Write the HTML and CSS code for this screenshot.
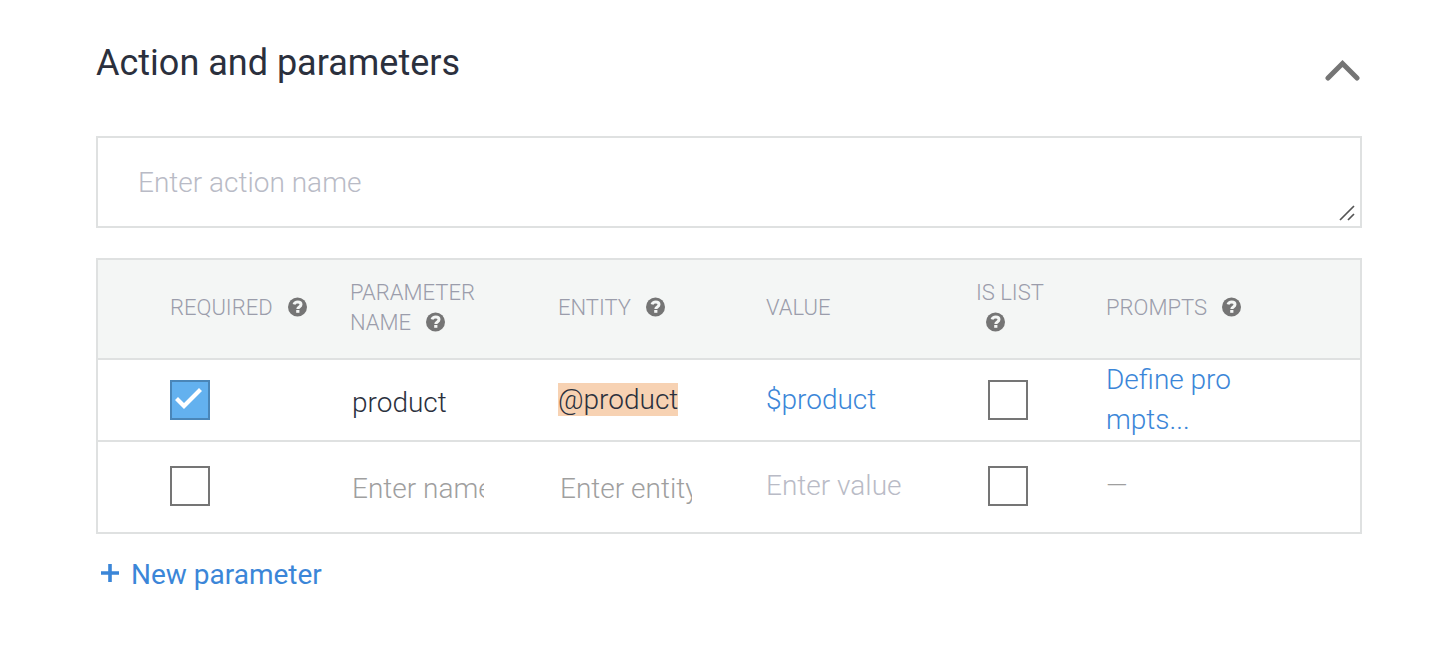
FILE: index.html
```html
<!DOCTYPE html>
<html lang="en">
<head>
    <meta charset="UTF-8">
    <meta name="viewport" content="width=device-width, initial-scale=1.0">
    <title>Action and parameters</title>
    <link rel="stylesheet" href="styles.css">
</head>
<body>
    <svg class="sprite" aria-hidden="true">
        <symbol id="help" viewBox="0 0 20 20">
            <circle cx="9.500" cy="10" r="9.500" fill="#757575"/>
            <path d="M6 7.400C6.600 5.600 8 4.900 9.700 4.900c1.900 0 3.300 1 3.300 2.700 0 2.400-3.200 2.300-3.200 4.400" fill="none" stroke="#f4f6f5" stroke-width="3"/>
            <rect x="8.200" y="13" width="3.200" height="2.800" fill="#f4f6f5"/>
        </symbol>
    </svg>
    <section class="panel">
        <header class="panel-header">
            <h1>Action and parameters</h1>
            <button class="collapse" type="button" aria-label="Collapse">
                <svg width="36" height="24" viewBox="0 0 36 24"><path d="M4 20 18.500 5.500 33 20" fill="none" stroke="#757575" stroke-width="5" stroke-linecap="round"/></svg>
            </button>
        </header>
        <div class="action">
            <textarea class="action-name" rows="1" placeholder="Enter action name" aria-label="Action name"></textarea>
            <svg class="grip" width="16" height="16" viewBox="0 0 16 16" aria-hidden="true"><path d="M1 15 15 1M9 15l6-6" fill="none" stroke="#555" stroke-width="1.700"/></svg>
        </div>
        <table class="params">
            <colgroup>
                <col class="col-required">
                <col class="col-name">
                <col class="col-entity">
                <col class="col-value">
                <col class="col-list">
                <col class="col-prompts">
            </colgroup>
            <thead>
                <tr>
                    <th class="first">REQUIRED <svg class="help"><use href="#help"/></svg></th>
                    <th>PARAMETER<br>NAME <svg class="help"><use href="#help"/></svg></th>
                    <th>ENTITY <svg class="help"><use href="#help"/></svg></th>
                    <th>VALUE</th>
                    <th>IS LIST<br><svg class="help"><use href="#help"/></svg></th>
                    <th>PROMPTS <svg class="help"><use href="#help"/></svg></th>
                </tr>
            </thead>
            <tbody>
                <tr>
                    <td class="first"><input type="checkbox" class="check" aria-label="Required" checked></td>
                    <td><input type="text" class="field" value="product" aria-label="Parameter name"></td>
                    <td><span class="entity">@product</span></td>
                    <td><span class="value">$product</span></td>
                    <td class="list"><input type="checkbox" class="check" aria-label="Is list"></td>
                    <td><a href="#" class="prompts">Define prompts...</a></td>
                </tr>
                <tr class="new-row">
                    <td class="first"><input type="checkbox" class="check" aria-label="Required"></td>
                    <td><input type="text" class="field" placeholder="Enter name" aria-label="Parameter name"></td>
                    <td><input type="text" class="field" placeholder="Enter entity" aria-label="Entity"></td>
                    <td><span class="hint">Enter value</span></td>
                    <td class="list"><input type="checkbox" class="check" aria-label="Is list"></td>
                    <td><span class="dash">—</span></td>
                </tr>
            </tbody>
        </table>
        <button class="add" type="button">
            <svg width="20" height="24" viewBox="0 0 20 24" aria-hidden="true"><path d="M10 1v18M1 10h18" stroke="#3b86d8" stroke-width="3.600"/></svg>
            New parameter
        </button>
    </section>
</body>
</html>
```

FILE: styles.css
```css
* {
    box-sizing: border-box;
}
body {
    margin: 0;
    background: #fff;
    color: #2b303d;
    font-family: Roboto, sans-serif;
    font-size: 28px;
    font-weight: 300;
}
button, input, textarea {
    font: inherit;
    color: inherit;
}
.sprite {
    display: none;
}
.panel {
    padding: 40px 92px 40px 96px;
}
.panel-header {
    display: flex;
    justify-content: space-between;
    align-items: flex-start;
    margin-bottom: 50px;
}
h1 {
    margin: 0;
    font-size: 36px;
    line-height: 46px;
    font-weight: 400;
}
.collapse {
    padding: 0;
    margin: 18px 2px 0 0;
    border: 0;
    background: none;
    line-height: 0;
    cursor: pointer;
}
.action {
    position: relative;
    margin-bottom: 30px;
}
.action-name {
    display: block;
    width: 100%;
    height: 92px;
    padding: 26px 40px;
    border: 2px solid #dfe1e1;
    border-radius: 0;
    line-height: 38px;
    resize: none;
    outline: none;
    overflow: hidden;
}
.action-name::placeholder {
    color: #b9bbc6;
}
.grip {
    position: absolute;
    right: 7px;
    bottom: 7px;
}
.params {
    width: 100%;
    table-layout: fixed;
    border: 2px solid #dfe1e1;
    border-spacing: 0;
}
.col-required {
    width: 252px;
}
.col-name, .col-entity {
    width: 208px;
}
.col-value {
    width: 210px;
}
.col-list {
    width: 130px;
}
th {
    height: 100px;
    padding: 0 0 2px;
    background: #f4f6f5;
    border-bottom: 2px solid #dfe1e1;
    color: #9b9dab;
    font-size: 22px;
    line-height: 30px;
    font-weight: 300;
    text-align: left;
}
td {
    height: 82px;
    padding: 0;
    border-bottom: 2px solid #dfe1e1;
    line-height: 40px;
}
.new-row td {
    height: 90px;
    padding-bottom: 2px;
    border-bottom: 0;
}
.first {
    padding-left: 72px;
}
.list {
    padding-left: 12px;
}
.help {
    width: 20px;
    height: 20px;
    margin-left: 10px;
    vertical-align: -2px;
}
.check {
    appearance: none;
    display: block;
    width: 40px;
    height: 40px;
    margin: 0;
    border: 2px solid #757575;
}
.check:checked {
    border-color: #4a86b8;
    background: #63b1ef;
}
.check:checked::before {
    content: "";
    display: block;
    width: 28px;
    height: 24px;
    margin: 4px 0 0 3px;
    background: #fff;
    clip-path: polygon(0 14px, 3px 11px, 9px 17px, 24px 2px, 27px 5px, 9px 23px);
}
.field {
    display: block;
    width: 134px;
    height: 40px;
    margin-top: 6px;
    padding: 0 0 0 2px;
    border: 0;
    background: none;
    outline: none;
}
.field::placeholder {
    color: #9f9f9f;
}
.entity {
    background: #f7d2b3;
}
.value, .prompts {
    color: #3b86d8;
}
.prompts {
    display: block;
    width: 132px;
    text-decoration: none;
    word-break: break-all;
}
.hint {
    color: #b9bbc6;
}
.dash {
    color: #9f9f9f;
}
.add {
    display: flex;
    align-items: center;
    gap: 11px;
    margin-top: 20px;
    padding: 0 4px;
    border: 0;
    background: none;
    color: #3b86d8;
    font-weight: 400;
    line-height: 42px;
    cursor: pointer;
}
```
